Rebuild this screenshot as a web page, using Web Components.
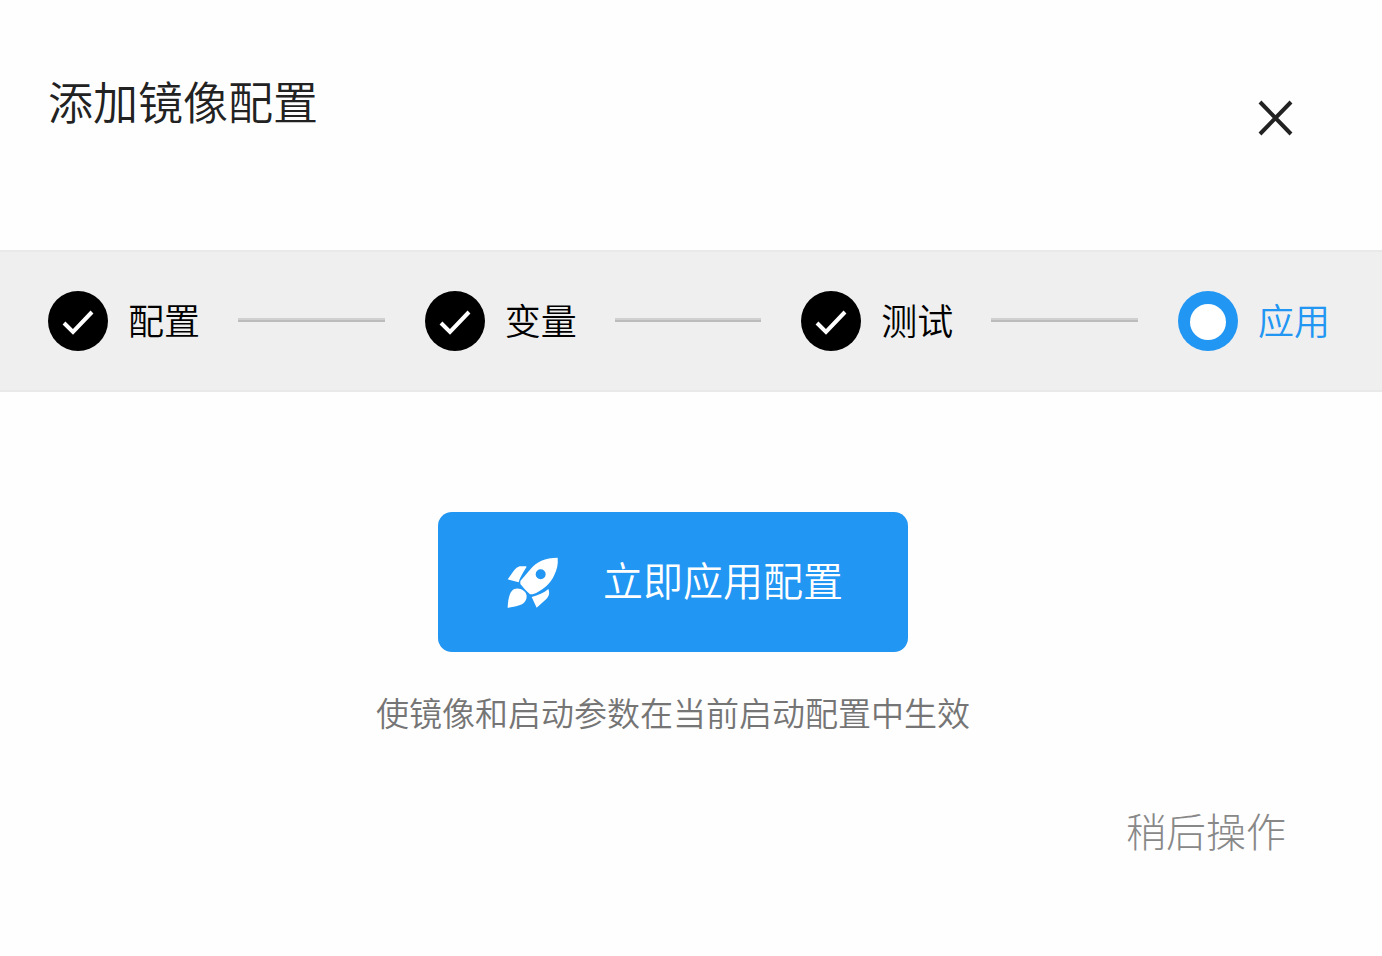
<!DOCTYPE html>
<html lang="zh-CN">
<head>
<meta charset="utf-8">
<meta name="viewport" content="width=device-width, initial-scale=1">
<title>添加镜像配置</title>
<style>
  body {
    margin: 0;
    background: #fefefe;
    color: #222;
    font-family: "Noto Sans CJK SC DemiLight", "Noto Sans CJK SC", sans-serif;
    font-weight: 350;
  }
</style>
</head>
<body>
<config-dialog heading="添加镜像配置">
  <step-bar slot="steps">
    <step-item state="done">配置</step-item>
    <step-item state="done">变量</step-item>
    <step-item state="done">测试</step-item>
    <step-item state="current">应用</step-item>
  </step-bar>
  <apply-button>立即应用配置</apply-button>
  <hint-text>使镜像和启动参数在当前启动配置中生效</hint-text>
  <later-button slot="footer">稍后操作</later-button>
</config-dialog>

<script>
class ConfigDialog extends HTMLElement {
  constructor() {
    super();
    const shadowRoot = this.attachShadow({mode: 'open'});
    shadowRoot.innerHTML = `
      <style>
        :host {
          display: block;
        }
        header {
          display: flex;
          align-items: center;
          justify-content: space-between;
          padding: 73px 84px 87px 48px;
        }
        h1 {
          margin: 0;
          padding-bottom: 34px;
          font-size: 45px;
          line-height: 56px;
          font-weight: inherit;
        }
        .close {
          display: flex;
          padding: 0;
          border: 0;
          background: none;
          color: #222;
          cursor: pointer;
        }
        main {
          display: flex;
          flex-direction: column;
          align-items: center;
          gap: 36px;
          padding: 120px 84px 66px 48px;
        }
        footer {
          display: flex;
          justify-content: flex-end;
          padding: 0 84px 48px 48px;
        }
      </style>
      <header>
        <h1></h1>
        <button class="close" type="button" aria-label="关闭">
          <svg width="44" height="44" viewBox="0 0 44 44" fill="none" stroke="currentColor" stroke-width="4">
            <path d="M6 6 37 38M37 6 6 38"/>
          </svg>
        </button>
      </header>
      <slot name="steps"></slot>
      <main><slot></slot></main>
      <footer><slot name="footer"></slot></footer>
    `;
  }

  connectedCallback() {
    this.shadowRoot.querySelector('h1').textContent = this.getAttribute('heading');
    this.shadowRoot.querySelector('.close').onclick = () => this.remove();
  }
}

class StepBar extends HTMLElement {
  constructor() {
    super();
    const shadowRoot = this.attachShadow({mode: 'open'});
    shadowRoot.innerHTML = `
      <style>
        :host {
          display: flex;
          align-items: center;
          height: 138px;
          padding: 0 52px 0 48px;
          border-top: 2px solid #e9e9e9;
          border-bottom: 2px solid #e9e9e9;
          background: #efefef;
        }
        ::slotted(step-item:not(:last-child)) {
          flex: 1 1 auto;
        }
      </style>
      <slot></slot>
    `;
  }
}

class StepItem extends HTMLElement {
  constructor() {
    super();
    const shadowRoot = this.attachShadow({mode: 'open'});
    shadowRoot.innerHTML = `
      <style>
        :host {
          display: flex;
          align-items: center;
          color: #000;
          font-size: 36px;
          line-height: 48px;
          white-space: nowrap;
        }
        :host([state="current"]) {
          color: #2196f3;
        }
        svg {
          flex: none;
          margin-right: 20px;
        }
        .label {
          padding-bottom: 4px;
        }
        .dot, :host([state="current"]) .check {
          display: none;
        }
        :host([state="current"]) .dot {
          display: inline;
        }
        .line {
          flex: 1;
          height: 2px;
          margin: 0 40px 2px 38px;
          border-top: 2px solid #d0d0d0;
          background: #bcbcbc;
        }
        :host(:last-child) .line {
          display: none;
        }
      </style>
      <svg width="60" height="60" viewBox="0 0 60 60" aria-hidden="true">
        <circle cx="30" cy="30" r="30" fill="currentColor"/>
        <path class="check" d="M16 32 25 41 44 21" fill="none" stroke="#fff" stroke-width="4"/>
        <circle class="dot" cx="30" cy="31" r="18" fill="#fff"/>
      </svg>
      <span class="label"><slot></slot></span>
      <span class="line"></span>
    `;
  }
}

class ApplyButton extends HTMLElement {
  constructor() {
    super();
    const shadowRoot = this.attachShadow({mode: 'open'});
    shadowRoot.innerHTML = `
      <style>
        :host {
          display: block;
        }
        button {
          display: flex;
          align-items: center;
          gap: 40px;
          height: 140px;
          padding: 0 65px;
          border: 0;
          border-radius: 14px;
          background: #2196f3;
          color: #fff;
          font: inherit;
          font-size: 40px;
          line-height: 56px;
          cursor: pointer;
        }
        .label {
          padding-bottom: 6px;
        }
      </style>
      <button type="button">
        <svg width="60" height="60" viewBox="24 21 180 180" fill="currentColor" aria-hidden="true">
          <path fill-rule="evenodd" d="M188 38C150 38 124 50 105 74L76 108V117C84 127 94 138 105 148H113C142 137 166 116 177 92C186 74 190 58 188 38ZM137 73a15 15 0 1 0 0 30a15 15 0 1 0 0-30Z"/>
          <path d="M94 64H74C60 68 54 82 38 103L71 112C74 98 84 84 94 67Z"/>
          <path d="M110 156C130 151 146 144 160 132C165 144 162 154 154 162L125 188Z"/>
          <path d="M38 188C39 162 44 138 58 132C74 126 94 138 95 153C95 176 76 184 38 188Z"/>
        </svg>
        <span class="label"><slot></slot></span>
      </button>
    `;
  }
}

class HintText extends HTMLElement {
  constructor() {
    super();
    const shadowRoot = this.attachShadow({mode: 'open'});
    shadowRoot.innerHTML = `
      <style>
        :host {
          display: block;
          color: #757575;
          font-size: 33px;
          line-height: 48px;
        }
        p {
          margin: 0;
        }
      </style>
      <p><slot></slot></p>
    `;
  }
}

class LaterButton extends HTMLElement {
  constructor() {
    super();
    const shadowRoot = this.attachShadow({mode: 'open'});
    shadowRoot.innerHTML = `
      <style>
        :host {
          display: block;
        }
        button {
          padding: 0 12px;
          border: 0;
          background: none;
          color: #888;
          font-family: "Noto Sans CJK SC Light", "Noto Sans CJK SC", sans-serif;
          font-size: 40px;
          font-weight: 300;
          line-height: 56px;
          cursor: pointer;
        }
      </style>
      <button type="button"><slot></slot></button>
    `;
  }
}

customElements.define('config-dialog', ConfigDialog)
customElements.define('step-bar', StepBar)
customElements.define('step-item', StepItem)
customElements.define('apply-button', ApplyButton)
customElements.define('hint-text', HintText)
customElements.define('later-button', LaterButton)
</script>
</body>
</html>
